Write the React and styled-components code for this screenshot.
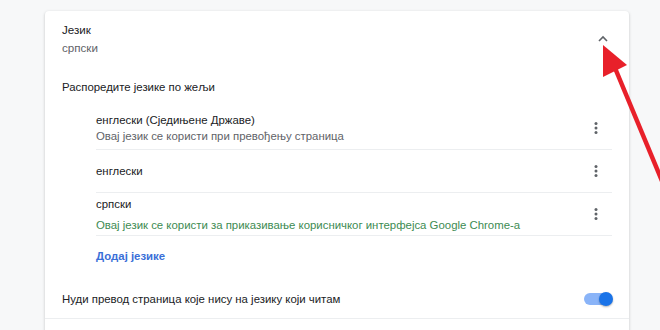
import React from 'react';
import styled, { createGlobalStyle } from 'styled-components';

const GlobalStyle = createGlobalStyle`
    html, body {
        margin: 0;
        padding: 0;
        background: #f7f8f9;
        font-family: "Liberation Sans", Roboto, sans-serif;
        overflow: hidden;
    }
`;

const Page = styled.div`
    position: relative;
    width: 660px;
    height: 330px;
    padding: 11px 31px 0 45px;
    box-sizing: border-box;
`;

const Card = styled.section`
    background: #fff;
    border-radius: 4px;
    box-shadow: 0 1px 2px rgba(60, 64, 67, 0.2), 0 1px 3px 1px rgba(60, 64, 67, 0.08);
    height: 330px;
    display: flex;
    flex-direction: column;
`;

const Header = styled.div`
    display: flex;
    align-items: center;
    padding: 10px 18px 0 17px;
`;

const HeaderText = styled.div`
    flex: 1;
    display: flex;
    flex-direction: column;
`;

const Title = styled.div`
    font-size: 11.6px;
    line-height: 18px;
    color: ${p => (p.$muted ? '#5f6368' : '#202124')};
`;

const Chevron = styled.svg`
    width: 16px;
    height: 16px;
`;

const SubHeading = styled.div`
    font-size: 11.4px;
    line-height: 18px;
    color: #202124;
    padding: 21px 17px 0;
`;

const List = styled.div`
    display: flex;
    flex-direction: column;
    margin: 11px 17px 0 51px;
`;

const Row = styled.div`
    display: flex;
    align-items: center;
    height: 42px;
    border-bottom: 1px solid #eceef0;
`;

const RowText = styled.div`
    flex: 1;
    display: flex;
    flex-direction: column;
    gap: ${p => p.$gap || 0}px;
`;

const Name = styled.div`
    font-size: 11.4px;
    line-height: 16px;
    color: #202124;
`;

const Note = styled.div`
    font-size: 11.4px;
    line-height: 16px;
    color: ${p => (p.$green ? '#3d8b52' : '#5f6368')};
`;

const MenuButton = styled.div`
    width: 32px;
    display: flex;
    justify-content: center;
    align-items: center;
`;

const AddLink = styled.div`
    font-size: 11.4px;
    line-height: 18px;
    font-weight: 700;
    color: #3a6fd8;
    margin: 11px 0 0 51px;
`;

const ToggleRow = styled.div`
    display: flex;
    align-items: center;
    height: 38px;
    margin-top: 15px;
    padding: 0 17px;
    border-bottom: 1px solid #eceef0;
`;

const ToggleLabel = styled.div`
    flex: 1;
    font-size: 11.4px;
    line-height: 18px;
    color: #202124;
`;

const Toggle = styled.div`
    position: relative;
    width: 27px;
    height: 12px;
    border-radius: 6px;
    background: #8ab4f8;
    margin-right: 1px;
`;

const Knob = styled.div`
    position: absolute;
    right: -2px;
    top: -1px;
    width: 14px;
    height: 14px;
    border-radius: 50%;
    background: #1a73e8;
    box-shadow: 0 1px 2px rgba(0, 0, 0, 0.3);
`;

const Arrow = styled.svg`
    position: absolute;
    left: 0;
    top: 0;
    pointer-events: none;
`;

const Dots = () => (
    <svg width="18" height="18" viewBox="0 0 18 18">
        <circle cx="9" cy="4.5" r="1.5" fill="#5f6368" />
        <circle cx="9" cy="9" r="1.5" fill="#5f6368" />
        <circle cx="9" cy="13.5" r="1.5" fill="#5f6368" />
    </svg>
);

const languages = [
    { name: 'енглески (Сједињене Државе)', note: 'Овај језик се користи при превођењу страница' },
    { name: 'енглески' },
    { name: 'српски', note: 'Овај језик се користи за приказивање корисничког интерфејса Google Chrome-а', green: true, gap: 5 },
];

export default function App() {
    return (
        <>
            <GlobalStyle />
            <Page>
                <Card>
                    <Header>
                        <HeaderText>
                            <Title>Језик</Title>
                            <Title $muted>српски</Title>
                        </HeaderText>
                        <Chevron viewBox="0 0 16 16">
                            <path d="M4 10 L8 6 L12 10" fill="none" stroke="#5f6368" strokeWidth="1.6" />
                        </Chevron>
                    </Header>
                    <SubHeading>Распоредите језике по жељи</SubHeading>
                    <List>
                        {languages.map(lang => (
                            <Row key={lang.name}>
                                <RowText $gap={lang.gap}>
                                    <Name>{lang.name}</Name>
                                    {lang.note && <Note $green={lang.green}>{lang.note}</Note>}
                                </RowText>
                                <MenuButton><Dots /></MenuButton>
                            </Row>
                        ))}
                    </List>
                    <AddLink>Додај језике</AddLink>
                    <ToggleRow>
                        <ToggleLabel>Нуди превод страница које нису на језику који читам</ToggleLabel>
                        <Toggle><Knob /></Toggle>
                    </ToggleRow>
                </Card>
                <Arrow width="660" height="330" viewBox="0 0 660 330">
                    <line x1="615" y1="68" x2="672" y2="205" stroke="#e8202a" strokeWidth="4.5" />
                    <polygon points="603,45 603,77 627,65" fill="#e8202a" />
                </Arrow>
            </Page>
        </>
    );
}
